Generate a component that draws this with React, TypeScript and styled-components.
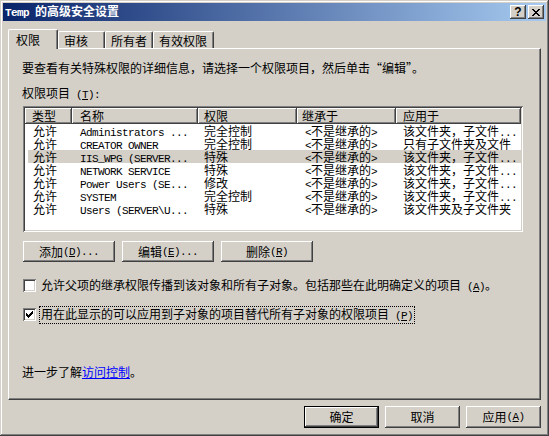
import React from 'react';
import styled, { createGlobalStyle, css } from 'styled-components';

const CJK = `"Noto Sans CJK SC", "Noto Sans CJK JP", sans-serif`;
const MONO = `"Liberation Mono", "DejaVu Sans Mono", monospace`;
const FACE = '#D4D0C8';

const GlobalStyle = createGlobalStyle`
  html, body { margin: 0; padding: 0; background: ${FACE}; }
  body { font-family: ${CJK}; font-size: 12px; }
  #root { width: 549px; height: 436px; overflow: hidden; }
`;

const raised = css`
  box-shadow: inset -1px -1px #404040, inset 1px 1px #ffffff, inset -2px -2px #808080, inset 2px 2px ${FACE};
`;
const sunken = css`
  box-shadow: inset 1px 1px #808080, inset -1px -1px #ffffff, inset 2px 2px #404040, inset -2px -2px ${FACE};
`;

const Window = styled.div`
  box-sizing: border-box;
  width: 549px;
  height: 436px;
  padding: 3px;
  display: flex;
  flex-direction: column;
  background: ${FACE};
  box-shadow: inset -1px -1px #404040, inset 1px 1px ${FACE}, inset -2px -2px #808080, inset 2px 2px #ffffff;
  font-family: ${CJK};
  font-size: 12px;
  line-height: 12px;
  color: #000;
`;

const TitleBar = styled.div`
  height: 18px;
  flex: none;
  display: flex;
  align-items: center;
  gap: 2px;
  padding: 0 2px;
  background: linear-gradient(to right, #0a246a, #a6caf0);
`;

const Title = styled.div`
  flex: 1;
  color: #fff;
  font-weight: 700;
  font-size: 12px;
  line-height: 12px;
  white-space: nowrap;
`;

const Mono = styled.span<{ $bold?: boolean }>`
  font-family: ${MONO};
  font-size: 11px;
  letter-spacing: -0.6px;
  font-weight: ${(p) => (p.$bold ? 700 : 400)};
`;

const CaptionButton = styled.div`
  width: 16px;
  height: 14px;
  box-sizing: border-box;
  flex: none;
  background: ${FACE};
  ${raised};
  display: flex;
  align-items: center;
  justify-content: center;
  font-family: "Liberation Sans", sans-serif;
  font-weight: 700;
  font-size: 12px;
  line-height: 12px;
  color: #000;
`;

const Body = styled.div`
  flex: 1;
  min-height: 0;
  display: flex;
  flex-direction: column;
  padding: 8px 5px 5px 5px;
`;

const TabStrip = styled.div`
  display: flex;
  align-items: flex-end;
  flex: none;
  position: relative;
  z-index: 1;
`;

const Tab = styled.div<{ $active?: boolean; $w: number }>`
  box-sizing: border-box;
  width: ${(p) => p.$w}px;
  height: ${(p) => (p.$active ? 20 : 17)}px;
  margin-bottom: ${(p) => (p.$active ? -1 : 0)}px;
  padding: ${(p) => (p.$active ? '4px 0 0 7px' : '3px 0 0 5px')};
  background: ${FACE};
  border-top: 1px solid #fff;
  border-left: 1px solid #fff;
  border-right: 1px solid #404040;
  box-shadow: inset -1px 0 #808080;
  border-radius: 2px 2px 0 0;
  line-height: 12px;
  white-space: nowrap;
`;

const Panel = styled.div`
  flex: 1;
  min-height: 0;
  box-sizing: border-box;
  border: 1px solid;
  border-color: #fff #404040 #404040 #fff;
  box-shadow: inset -1px -1px #808080;
  padding: 13px 15px 0 13px;
  display: flex;
  flex-direction: column;
`;

const Line = styled.div<{ $mt?: number }>`
  margin-top: ${(p) => p.$mt ?? 0}px;
  line-height: 12px;
  height: 12px;
  white-space: nowrap;
`;

const ListBox = styled.div`
  box-sizing: border-box;
  width: 500px;
  height: 126px;
  margin: 7px 0 0 1px;
  padding: 2px;
  background: #fff;
  ${sunken};
  flex: none;
`;

const HeaderRow = styled.div`
  display: flex;
  height: 16px;
`;

const HeaderCell = styled.div<{ $w: number; $pad: number }>`
  box-sizing: border-box;
  width: ${(p) => p.$w}px;
  height: 16px;
  padding: 2px 0 0 ${(p) => p.$pad}px;
  background: ${FACE};
  box-shadow: inset -1px -1px #404040, inset 1px 1px #ffffff, inset -2px -2px #808080;
  line-height: 12px;
  white-space: nowrap;
`;

const Row = styled.div<{ $selected?: boolean }>`
  display: flex;
  height: 13px;
  line-height: 13px;
  background: ${(p) => (p.$selected ? `linear-gradient(to right, transparent 3px, ${FACE} 3px)` : 'transparent')};
`;

const Cell = styled.div<{ $w: number; $pad: number }>`
  box-sizing: border-box;
  width: ${(p) => p.$w}px;
  padding-left: ${(p) => p.$pad}px;
  white-space: nowrap;
`;

const ButtonRow = styled.div`
  display: flex;
  gap: 7px;
  margin: 9px 0 0 1px;
  flex: none;
`;

const PushButton = styled.div<{ $w: number; $h: number; $default?: boolean }>`
  box-sizing: border-box;
  width: ${(p) => p.$w}px;
  height: ${(p) => p.$h}px;
  flex: none;
  background: ${FACE};
  ${(p) =>
    p.$default
      ? css`box-shadow: inset 0 0 0 1px #000, inset -2px -2px #404040, inset 2px 2px #fff, inset -3px -3px #808080;`
      : raised};
  display: flex;
  align-items: center;
  justify-content: center;
  line-height: 12px;
  white-space: nowrap;
`;

const CheckRow = styled.div<{ $mt: number }>`
  display: flex;
  align-items: center;
  height: 13px;
  margin: ${(p) => p.$mt}px 0 0 1px;
  flex: none;
`;

const CheckBox = styled.div`
  box-sizing: border-box;
  width: 13px;
  height: 13px;
  flex: none;
  background: #fff;
  ${sunken};
  display: flex;
  align-items: center;
  justify-content: center;
`;

const CheckLabel = styled.span<{ $focused?: boolean }>`
  margin-left: 3px;
  padding: 1px 1px;
  border: 1px ${(p) => (p.$focused ? 'dotted #000' : 'solid transparent')};
  line-height: 12px;
  white-space: nowrap;
`;

const Link = styled.span`
  color: #0000ff;
  text-decoration: underline;
`;

const BottomBar = styled.div`
  display: flex;
  justify-content: flex-end;
  gap: 6px;
  margin-top: 6px;
  flex: none;
`;

function PixelGlyph({ rows }: { rows: string[] }) {
  const w = rows[0].length;
  const h = rows.length;
  const rects: React.ReactNode[] = [];
  rows.forEach((r, y) =>
    r.split('').forEach((c, x) => {
      if (c === 'X') rects.push(<rect key={`${x}-${y}`} x={x} y={y} width={1} height={1} />);
    })
  );
  return (
    <svg width={w} height={h} viewBox={`0 0 ${w} ${h}`} shapeRendering="crispEdges" fill="#000">
      {rects}
    </svg>
  );
}

const CLOSE = ['XX....XX', '.XX..XX.', '..XXXX..', '...XX...', '..XXXX..', '.XX..XX.', 'XX....XX'];
const CHECK = ['......X', '.....XX', 'X...XXX', 'XX.XXX.', 'XXXXX..', '.XXX...', '..X....'];

function Mixed({ text }: { text: string }) {
  const parts = text.split(/([\x20-\x7E]+)/).filter((s) => s.length);
  return (
    <>
      {parts.map((p, i) => (/^[\x20-\x7E]+$/.test(p) ? <Mono key={i}>{p}</Mono> : <span key={i}>{p}</span>))}
    </>
  );
}

function Accel({ k, tail = '' }: { k: string; tail?: string }) {
  return (
    <Mono>
      {' ('}
      <u>{k}</u>
      {')' + tail}
    </Mono>
  );
}

const COLS = [
  { w: 47, hp: 7, cp: 8, label: '类型' },
  { w: 126, hp: 8, cp: 8, label: '名称' },
  { w: 99, hp: 6, cp: 6, label: '权限' },
  { w: 99, hp: 5, cp: 8, label: '继承于' },
  { w: 125, hp: 7, cp: 7, label: '应用于' },
];

const ROWS: { cells: string[]; selected?: boolean }[] = [
  { cells: ['允许', 'Administrators ...', '完全控制', '<不是继承的>', '该文件夹，子文件...'] },
  { cells: ['允许', 'CREATOR OWNER', '完全控制', '<不是继承的>', '只有子文件夹及文件'] },
  { cells: ['允许', 'IIS_WPG (SERVER...', '特殊', '<不是继承的>', '该文件夹，子文件...'], selected: true },
  { cells: ['允许', 'NETWORK SERVICE', '特殊', '<不是继承的>', '该文件夹，子文件...'] },
  { cells: ['允许', 'Power Users (SE...', '修改', '<不是继承的>', '该文件夹，子文件...'] },
  { cells: ['允许', 'SYSTEM', '完全控制', '<不是继承的>', '该文件夹，子文件...'] },
  { cells: ['允许', 'Users (SERVER\\U...', '特殊', '<不是继承的>', '该文件夹及子文件夹'] },
];

const TABS = [
  { label: '权限', w: 50, active: true },
  { label: '审核', w: 47 },
  { label: '所有者', w: 48 },
  { label: '有效权限', w: 61 },
];

export default function App() {
  return (
    <>
      <GlobalStyle />
      <Window>
        <TitleBar>
          <Title>
            <Mono $bold>Temp </Mono>的高级安全设置
          </Title>
          <CaptionButton>?</CaptionButton>
          <CaptionButton>
            <PixelGlyph rows={CLOSE} />
          </CaptionButton>
        </TitleBar>
        <Body>
          <TabStrip>
            {TABS.map((t) => (
              <Tab key={t.label} $w={t.w} $active={t.active}>
                {t.label}
              </Tab>
            ))}
          </TabStrip>
          <Panel>
            <Line>要查看有关特殊权限的详细信息，请选择一个权限项目，然后单击“编辑”。</Line>
            <Line $mt={13}>
              权限项目<Accel k="T" tail=":" />
            </Line>
            <ListBox>
              <HeaderRow>
                {COLS.map((c) => (
                  <HeaderCell key={c.label} $w={c.w} $pad={c.hp}>
                    {c.label}
                  </HeaderCell>
                ))}
              </HeaderRow>
              {ROWS.map((r, i) => (
                <Row key={i} $selected={r.selected}>
                  {r.cells.map((text, j) => (
                    <Cell key={j} $w={COLS[j].w} $pad={COLS[j].cp}>
                      <Mixed text={text} />
                    </Cell>
                  ))}
                </Row>
              ))}
            </ListBox>
            <ButtonRow>
              <PushButton $w={92} $h={21}>
                添加<Accel k="D" tail="..." />
              </PushButton>
              <PushButton $w={92} $h={21}>
                编辑<Accel k="E" tail="..." />
              </PushButton>
              <PushButton $w={92} $h={21}>
                删除<Accel k="R" />
              </PushButton>
            </ButtonRow>
            <CheckRow $mt={17}>
              <CheckBox />
              <CheckLabel>
                允许父项的继承权限传播到该对象和所有子对象。包括那些在此明确定义的项目<Accel k="A" />。
              </CheckLabel>
            </CheckRow>
            <CheckRow $mt={16}>
              <CheckBox>
                <PixelGlyph rows={CHECK} />
              </CheckBox>
              <CheckLabel $focused>
                用在此显示的可以应用到子对象的项目替代所有子对象的权限项目<Accel k="P" />
              </CheckLabel>
            </CheckRow>
            <Line $mt={45}>
              进一步了解<Link>访问控制</Link>。
            </Line>
          </Panel>
          <BottomBar>
            <PushButton $w={75} $h={22} $default>
              确定
            </PushButton>
            <PushButton $w={75} $h={22}>
              取消
            </PushButton>
            <PushButton $w={75} $h={22}>
              应用<Accel k="A" />
            </PushButton>
          </BottomBar>
        </Body>
      </Window>
    </>
  );
}
